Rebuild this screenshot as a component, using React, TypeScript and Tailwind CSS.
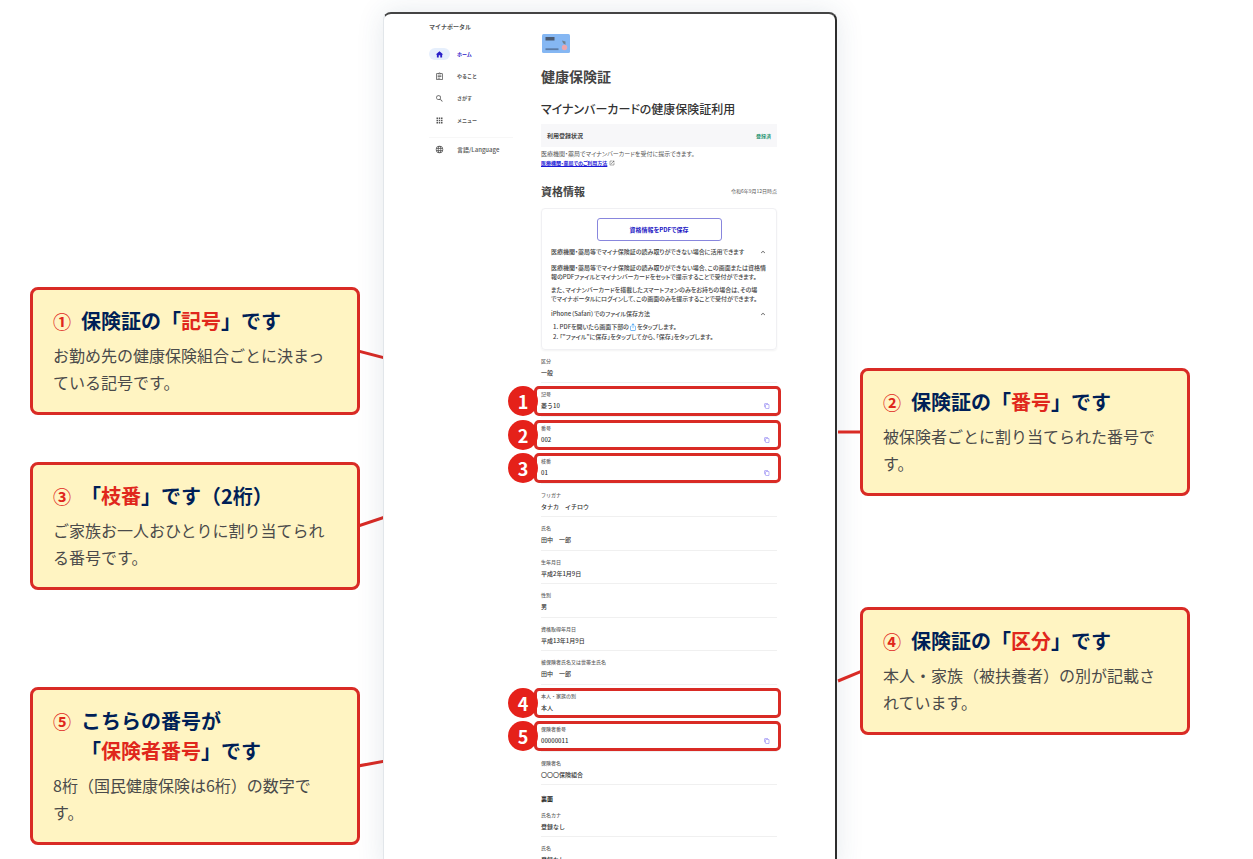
import type { ReactNode } from 'react';
import {
  MdApps,
  MdContentCopy,
  MdExpandLess,
  MdHome,
  MdIosShare,
  MdLanguage,
  MdOpenInNew,
  MdOutlineAssignment,
  MdSearch,
} from 'react-icons/md';

// ─── Data ────────────────────────────────────────────────────────────────────

interface Field {
  label: string;
  value: string;
  mark?: number;
  copy?: boolean;
}

const FIELDS: Field[] = [
  { label: '区分', value: '一般' },
  { label: '記号', value: '菱う10', mark: 1, copy: true },
  { label: '番号', value: '002', mark: 2, copy: true },
  { label: '枝番', value: '01', mark: 3, copy: true },
  { label: 'フリガナ', value: 'タナカ　イチロウ' },
  { label: '氏名', value: '田中　一郎' },
  { label: '生年月日', value: '平成2年1月9日' },
  { label: '性別', value: '男' },
  { label: '資格取得年月日', value: '平成13年1月9日' },
  { label: '被保険者氏名又は世帯主氏名', value: '田中　一郎' },
  { label: '本人・家族の別', value: '本人', mark: 4 },
  { label: '保険者番号', value: '00000011', mark: 5, copy: true },
  { label: '保険者名', value: '〇〇〇保険組合' },
];

const BACK_FIELDS: Field[] = [
  { label: '氏名カナ', value: '登録なし' },
  { label: '氏名', value: '登録なし' },
];

const NAV = [
  { label: 'ホーム', Icon: MdHome, active: true },
  { label: 'やること', Icon: MdOutlineAssignment },
  { label: 'さがす', Icon: MdSearch },
  { label: 'メニュー', Icon: MdApps },
];

// ─── Callouts ────────────────────────────────────────────────────────────────

interface CalloutProps {
  no: string;
  title: ReactNode;
  side: 'left' | 'right';
  // vertical distance the connector travels before it reaches the phone
  drop: number;
  children: ReactNode;
}

function Callout({ no, title, side, drop, children }: CalloutProps) {
  return (
    <section className="relative">
      <svg
        className={`absolute top-1/2 h-6 w-6 -translate-y-1/2 ${side === 'left' ? 'left-full' : 'right-full'}`}
        viewBox="0 0 24 24"
        stroke="#d92b25"
        strokeWidth="3"
      >
        {side === 'left' ? (
          <line x1="-2" y1="12" x2="25" y2={12 + drop} />
        ) : (
          <line x1="26" y1="12" x2="2" y2={12 + drop} />
        )}
      </svg>
      <div className="relative rounded-lg border-3 border-[#d92b25] bg-[#fff4c2] px-5 py-4">
        <h2 className="flex gap-2 text-xl leading-[30px] font-bold text-[#001f57]">
          <span className="w-5 text-lg leading-[30px] text-[#e0271c]">{no}</span>
          <span>{title}</span>
        </h2>
        <p className="mt-[6px] text-base leading-[27px] text-[#4a4a4a]">{children}</p>
      </div>
    </section>
  );
}

function Em({ children }: { children: ReactNode }) {
  return <em className="text-[#e0271c] not-italic">{children}</em>;
}

// ─── Field List ──────────────────────────────────────────────────────────────

function FieldRow({ label, value, mark, copy }: Field) {
  return (
    <div className="relative h-[33px] border-b border-[#f0f0f0] pt-[7px] even:h-[34px]">
      <dt className="text-[5px] leading-[8px] font-medium text-[#666]">{label}</dt>
      <dd className="flex items-center justify-between pr-[7px] text-[6px] leading-[16px] font-medium text-[#333]">
        {value}
        {copy && (
          <button type="button" aria-label={`${label}をコピー`} className="text-[#7a6cf0]">
            <MdContentCopy size={6} />
          </button>
        )}
      </dd>
      {mark && (
        <div className="absolute top-[3px] -right-1 -left-[7px] flex h-[30px] items-center rounded-[5px] border-3 border-[#d92b25]">
          <span className="-ml-[29px] flex size-[30px] items-center justify-center rounded-full bg-[#e5211a] text-lg font-bold text-white">
            {mark}
          </span>
        </div>
      )}
    </div>
  );
}

// ─── Portal Screen ───────────────────────────────────────────────────────────

function Sidebar() {
  return (
    <nav className="w-[112px] shrink-0 pt-[8px] text-[5px] font-bold text-[#555]">
      <p className="text-[6px] leading-[10px]">マイナポータル</p>
      <ul className="mt-[11px] w-[84px] border-b border-[#f7f7f7] pb-[6px]">
        {NAV.map(({ label, Icon, active }) => (
          <li key={label}>
            <a
              href="#"
              className={`flex h-[22px] items-center gap-[7px] ${active ? 'text-[#2a20c8]' : ''}`}
            >
              <span
                className={`flex h-[12px] w-[21px] items-center justify-center rounded-full ${active ? 'bg-[#e6effc]' : ''}`}
              >
                <Icon size={9} />
              </span>
              {label}
            </a>
          </li>
        ))}
      </ul>
      <a href="#" className="flex h-[22px] items-center gap-[7px] text-[6px] font-medium">
        <span className="flex w-[21px] justify-center">
          <MdLanguage size={9} />
        </span>
        言語/Language
      </a>
    </nav>
  );
}

function CardPicture() {
  return (
    <svg width="30" height="20" viewBox="0 0 30 20" aria-hidden="true">
      <rect x="1" width="28" height="19" rx="1.5" fill="#85b7f3" />
      <rect x="4.5" y="3" width="9" height="3.5" fill="#4b5a70" />
      <rect x="4.5" y="14.3" width="13" height="1.8" fill="#5b7ba6" />
      <path d="M21 6.5l3.5 1v3.2l-2.4-1.4z" fill="#6d8291" />
      <circle cx="23.5" cy="13.5" r="2.7" fill="#eba6ae" />
    </svg>
  );
}

function PdfPanel() {
  return (
    <div className="rounded-[4px] border border-[#f0f0f3] px-[9px] pt-[9px] pb-[7px] text-[6px] leading-[9px] font-medium text-[#444] shadow-xs">
      <button
        type="button"
        className="mx-auto block h-[23px] w-[125px] rounded-[3px] border border-[#8886dd] font-bold text-[#1d17c4]"
      >
        資格情報をPDFで保存
      </button>
      <h3 className="mt-[6px] flex items-center justify-between leading-[10px] whitespace-nowrap">
        医療機関・薬局等でマイナ保険証の読み取りができない場合に活用できます
        <MdExpandLess size={8} className="shrink-0" />
      </h3>
      <p className="mt-[6px] whitespace-nowrap">
        医療機関・薬局等でマイナ保険証の読み取りができない場合、この画面または資格情
        <br />
        報のPDFファイルとマイナンバーカードをセットで提示することで受付ができます。
      </p>
      <p className="mt-[4px] whitespace-nowrap">
        また、マイナンバーカードを搭載したスマートフォンのみをお持ちの場合は、その場
        <br />
        でマイナポータルにログインして、この画面のみを提示することで受付ができます。
      </p>
      <h3 className="mt-[6px] flex items-center justify-between leading-[10px]">
        iPhone（Safari）でのファイル保存方法
        <MdExpandLess size={8} />
      </h3>
      <ol className="mt-[3px] list-inside list-decimal pl-[2px] leading-[10px]">
        <li>
          PDFを開いたら画面下部の
          <MdIosShare size={8} className="inline align-middle text-[#48a3f2]" />
          をタップします。
        </li>
        <li>「"ファイル"に保存」をタップしてから、「保存」をタップします。</li>
      </ol>
    </div>
  );
}

function PortalScreen() {
  return (
    <div className="relative flex min-h-screen rounded-t-lg border-t-2 border-r-2 border-l border-t-[#444] border-r-[#2d2d2d] border-l-[#e2e6ea] bg-white pr-[58px] pl-[45px] shadow-[0_0_28px_rgba(40,70,110,0.12)]">
      <Sidebar />
      <main className="min-w-0 flex-1 pt-[20px]">
        <div className="[font-feature-settings:'palt']">
          <CardPicture />
          <h1 className="mt-[11px] text-[14px] leading-[22px] font-bold text-[#444]">健康保険証</h1>
          <h2 className="mt-[14px] text-[12px] leading-[16px] font-medium text-[#333]">
            マイナンバーカードの健康保険証利用
          </h2>
          <div className="mt-[7px] flex h-[23px] items-center justify-between bg-[#f7f7f9] px-[6px] text-[6px] font-bold text-[#444]">
            利用登録状況
            <span className="text-[5px] text-[#269472]">登録済</span>
          </div>
          <p className="mt-[2px] text-[6px] leading-[9px] text-[#555]">
            医療機関・薬局でマイナンバーカードを受付に提示できます。
          </p>
          <p className="flex items-center gap-[2px] text-[5px] leading-[10px] text-[#555]">
            <a href="#" className="font-bold text-[#1a16d6] underline">
              医療機関・薬局でのご利用方法
            </a>
            <MdOpenInNew size={6} />
          </p>
          <div className="mt-[15px] mb-[9px] flex items-center justify-between">
            <h2 className="text-[11px] leading-[16px] font-bold text-[#444]">資格情報</h2>
            <span className="text-[5px] text-[#555]">令和6年9月12日時点</span>
          </div>
          <PdfPanel />
        </div>
        <dl>
          {FIELDS.map((field) => (
            <FieldRow key={field.label} {...field} />
          ))}
        </dl>
        <h3 className="pt-[9px] text-[6px] leading-[10px] font-bold text-[#222]">裏面</h3>
        <dl>
          {BACK_FIELDS.map((field) => (
            <FieldRow key={field.label} {...field} />
          ))}
        </dl>
      </main>
    </div>
  );
}

// ─── Page ────────────────────────────────────────────────────────────────────

export default function App() {
  return (
    <div
      lang="ja"
      className="h-screen overflow-hidden bg-white pt-3 pl-[30px] font-['Noto_Sans_CJK_JP',sans-serif]"
    >
      <div className="grid grid-cols-[minmax(0,330px)_454px_minmax(0,330px)] gap-[23px]">
        <div className="flex flex-col pt-[275px]">
          <Callout no="①" side="left" drop={7} title={<>保険証の「<Em>記号</Em>」です</>}>
            お勤め先の健康保険組合ごとに決まっている記号です。
          </Callout>
          <div className="mt-[47px]">
            <Callout no="③" side="left" drop={-9} title={<>「<Em>枝番</Em>」です（2桁）</>}>
              ご家族お一人おひとりに割り当てられる番号です。
            </Callout>
          </div>
          <div className="mt-[97px]">
            <Callout
              no="⑤"
              side="left"
              drop={-5}
              title={
                <>
                  こちらの番号が
                  <br />「<Em>保険者番号</Em>」です
                </>
              }
            >
              8桁（国民健康保険は6桁）の数字です。
            </Callout>
          </div>
        </div>

        <PortalScreen />

        <div className="flex flex-col gap-[111px] pt-[356px]">
          <Callout no="②" side="right" drop={0} title={<>保険証の「<Em>番号</Em>」です</>}>
            被保険者ごとに割り当てられた番号です。
          </Callout>
          <Callout no="④" side="right" drop={10} title={<>保険証の「<Em>区分</Em>」です</>}>
            本人・家族（被扶養者）の別が記載されています。
          </Callout>
        </div>
      </div>
    </div>
  );
}
